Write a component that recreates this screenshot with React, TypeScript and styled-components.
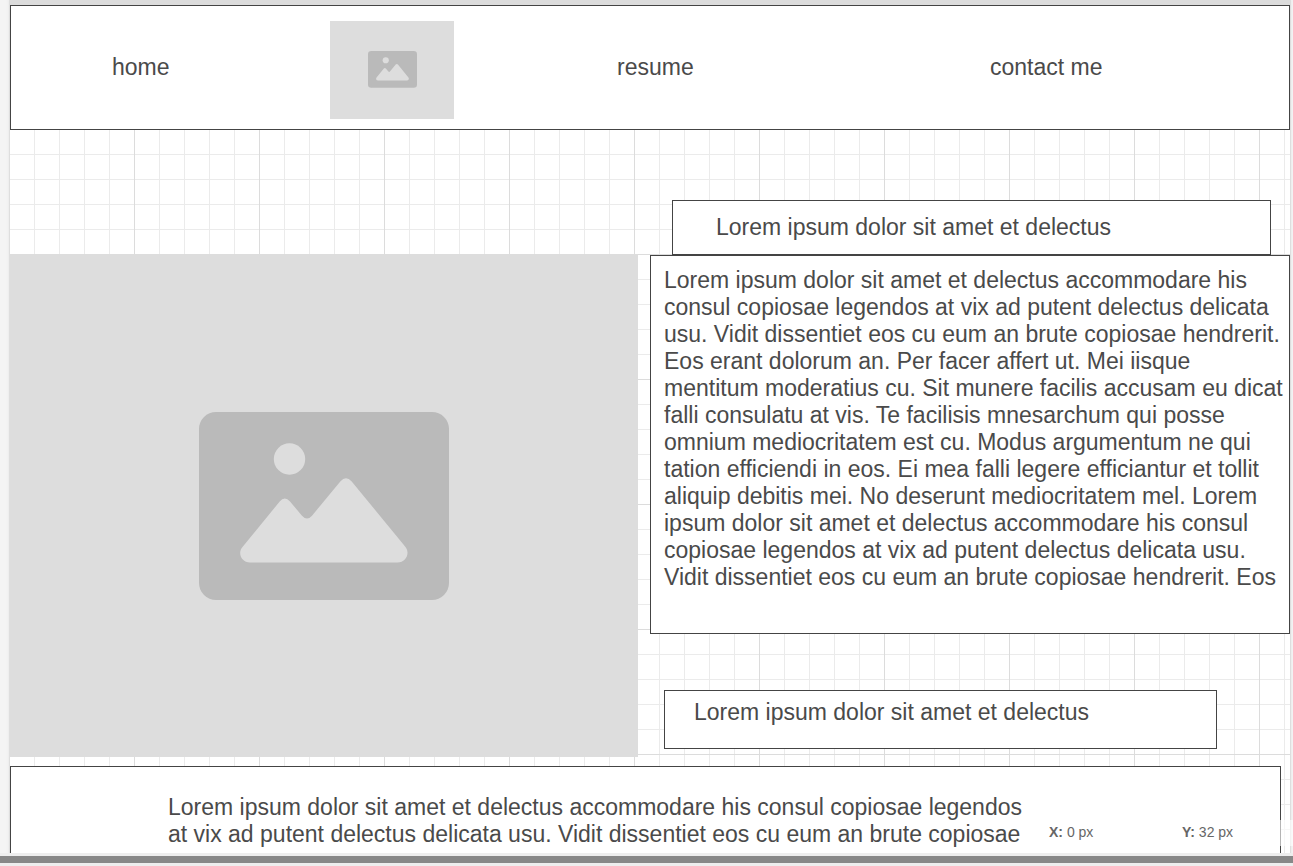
import React from "react";
import styled, { createGlobalStyle } from "styled-components";

const GlobalStyle = createGlobalStyle`
  *, *::before, *::after { box-sizing: border-box; }
  body {
    margin: 0;
    background: #f4f4f4;
    color: #4a4a4a;
    font-family: "Liberation Sans", Arial, sans-serif;
    font-size: 23px;
    line-height: 27px;
  }
  p { margin: 0; }
`;

const Editor = styled.div`
  display: flex;
  flex-direction: column;
  height: 100vh;
  overflow: hidden;
`;

const Viewport = styled.div`
  position: relative;
  flex: 1;
  min-height: 0;
  overflow: hidden;
  padding: 0 3px 0 10px;
`;

const Artboard = styled.div`
  border-top: 5px solid #dcdcdc;
  box-shadow: 0 0 0 1px #dedede, 0 0 3px 1px #e4e4e4;
  background-color: #fff;
  background-image:
    linear-gradient(to right, transparent 124px, #dcdcdc 124px),
    linear-gradient(to bottom, transparent 124px, #dcdcdc 124px),
    linear-gradient(to right, transparent 24px, #ebebeb 24px),
    linear-gradient(to bottom, transparent 24px, #ebebeb 24px);
  background-size: 125px 125px, 125px 125px, 25px 25px, 25px 25px;
`;

const Panel = styled.div`
  border: 1px solid #444;
  background: #fff;
`;

const Header = styled(Panel).attrs({ as: "header" })`
  height: 125px;
`;

const Nav = styled.nav`
  display: grid;
  grid-template-columns: 218fr 287fr 373fr 299fr;
  align-items: center;
  height: 100%;
  padding-left: 101px;
`;

const NavLink = styled.a`
  justify-self: start;
  color: inherit;
  text-decoration: none;
`;

const Placeholder = styled.div`
  display: flex;
  align-items: center;
  justify-content: center;
  background: #ddd;
`;

const Logo = styled(Placeholder)`
  width: 124px;
  height: 98px;
  margin-top: 4px;

  svg { width: 49px; }
`;

const Hero = styled.main`
  display: grid;
  grid-template-columns: 628fr 640fr;
  column-gap: 12px;
  padding-bottom: 9px;
`;

const HeroImage = styled(Placeholder)`
  height: 503px;
  margin-top: 124px;

  svg { width: 250px; }
`;

const Copy = styled.div`
  display: flex;
  flex-direction: column;
  padding-top: 70px;
`;

const Heading = styled(Panel)`
  height: 55px;
  margin: 0 3% 0 22px;
  padding: 13px 43px;
`;

const Body = styled(Panel)`
  height: 379px;
  padding: 11px 0 0 13px;
`;

const Caption = styled(Panel)`
  height: 59px;
  margin: 56px 73px 0 14px;
  padding: 8px 29px;
`;

const Footer = styled(Panel).attrs({ as: "footer" })`
  margin-right: 9px;
  padding: 27px 256px 27px 157px;
`;

const Coordinates = styled.div`
  position: absolute;
  right: 0;
  bottom: 7px;
  display: flex;
  width: 253px;
  height: 26px;
  padding-left: 9px;
  background: rgba(255, 255, 255, 0.6);
  color: #666;
  font-size: 14px;
  line-height: 24px;
`;

const Coordinate = styled.span`
  flex: none;
  width: 133px;

  & + & { width: auto; }
`;

const ScrollBar = styled.div`
  height: 13px;
  border: solid #eee;
  border-width: 3px 0;
  background: #888;
`;

const bodyLines = [
  "Lorem ipsum dolor sit amet et delectus accommodare his",
  "consul copiosae legendos at vix ad putent delectus delicata",
  "usu. Vidit dissentiet eos cu eum an brute copiosae hendrerit.",
  "Eos erant dolorum an. Per facer affert ut. Mei iisque",
  "mentitum moderatius cu. Sit munere facilis accusam eu dicat",
  "falli consulatu at vis. Te facilisis mnesarchum qui posse",
  "omnium mediocritatem est cu. Modus argumentum ne qui",
  "tation efficiendi in eos. Ei mea falli legere efficiantur et tollit",
  "aliquip debitis mei. No deserunt mediocritatem mel. Lorem",
  "ipsum dolor sit amet et delectus accommodare his consul",
  "copiosae legendos at vix ad putent delectus delicata usu.",
  "Vidit dissentiet eos cu eum an brute copiosae hendrerit. Eos",
];

const footerLines = [
  "Lorem ipsum dolor sit amet et delectus accommodare his consul copiosae legendos",
  "at vix ad putent delectus delicata usu. Vidit dissentiet eos cu eum an brute copiosae",
];

const Line = styled.span`
  display: block;
  white-space: nowrap;
`;

function PictureIcon() {
  return (
    <svg viewBox="0 0 250 188" aria-hidden="true">
      <rect width="250" height="188" rx="17" fill="#bababa" />
      <circle cx="90.5" cy="47" r="15.7" fill="#ddd" />
      <path
        fill="#ddd"
        d="M43.7 134.7 L80.7 89.5 Q85.7 83.5 91 89.5 L103 103.7 Q108 109.5 113 103.7 L141.3 69.5 Q147 63 152.7 69.5 L206.3 134.7 C211.5 141 207 150.6 198.5 150.6 H51 C42.5 150.6 38 141 43.7 134.7 Z"
      />
    </svg>
  );
}

function Lines({ lines }: { lines: string[] }) {
  return (
    <p>
      {lines.map((line) => (
        <Line key={line}>{line}</Line>
      ))}
    </p>
  );
}

export default function App() {
  return (
    <>
      <GlobalStyle />
      <Editor>
        <Viewport>
          <Artboard>
            <Header>
              <Nav>
                <NavLink href="#home">home</NavLink>
                <Logo><PictureIcon /></Logo>
                <NavLink href="#resume">resume</NavLink>
                <NavLink href="#contact">contact me</NavLink>
              </Nav>
            </Header>
            <Hero>
              <HeroImage><PictureIcon /></HeroImage>
              <Copy>
                <Heading><p>Lorem ipsum dolor sit amet et delectus</p></Heading>
                <Body><Lines lines={bodyLines} /></Body>
                <Caption><p>Lorem ipsum dolor sit amet et delectus</p></Caption>
              </Copy>
            </Hero>
            <Footer><Lines lines={footerLines} /></Footer>
          </Artboard>
          <Coordinates>
            <Coordinate><b>X:</b> 0 px</Coordinate>
            <Coordinate><b>Y:</b> 32 px</Coordinate>
          </Coordinates>
        </Viewport>
        <ScrollBar />
      </Editor>
    </>
  );
}
